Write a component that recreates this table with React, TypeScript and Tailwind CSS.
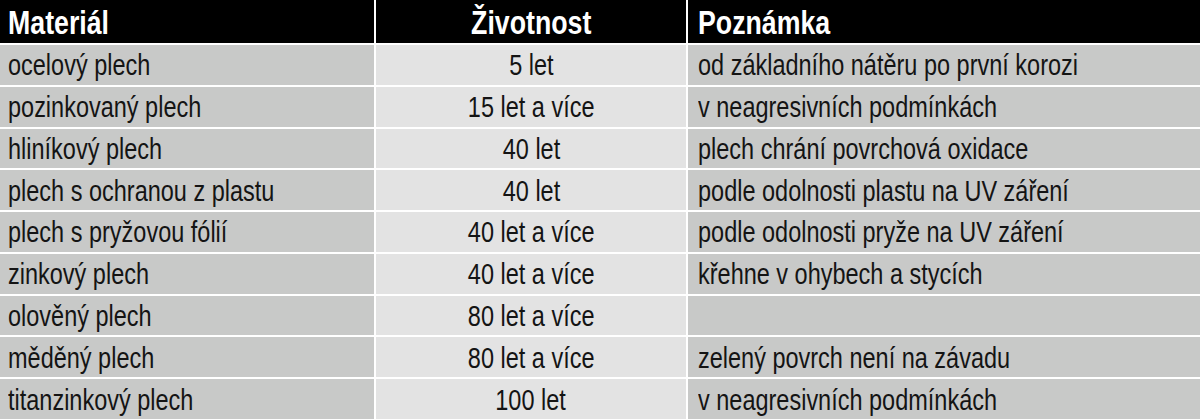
import React from "react";

interface Row {
  material: string;
  life: string;
  note: string;
}

const rows: Row[] = [
  { material: "ocelový plech", life: "5 let", note: "od základního nátěru po první korozi" },
  { material: "pozinkovaný plech", life: "15 let a více", note: "v neagresivních podmínkách" },
  { material: "hliníkový plech", life: "40 let", note: "plech chrání povrchová oxidace" },
  { material: "plech s ochranou z plastu", life: "40 let", note: "podle odolnosti plastu na UV záření" },
  { material: "plech s pryžovou fólií", life: "40 let a více", note: "podle odolnosti pryže na UV záření" },
  { material: "zinkový plech", life: "40 let a více", note: "křehne v ohybech a stycích" },
  { material: "olověný plech", life: "80 let a více", note: "" },
  { material: "měděný plech", life: "80 let a více", note: "zelený povrch není na závadu" },
  { material: "titanzinkový plech", life: "100 let", note: "v neagresivních podmínkách" },
];

// condensed look: no narrow face installed, so squeeze Liberation Sans
const head = "flex items-center bg-black pt-[2px] text-[33px] font-bold leading-none text-white";
const cell = "flex min-h-0 items-center pt-[2px] text-[29px] leading-none text-[#141414]";

export default function App() {
  return (
    <div className="grid h-[419px] w-[1200px] grid-cols-[374px_310px_1fr] grid-rows-[43px_repeat(9,minmax(0,1fr))] gap-[2px] overflow-hidden bg-white font-['Liberation_Sans',Arial,sans-serif]">
      <div className={`${head} pl-2`}>
        <span className="origin-left scale-x-[0.81] whitespace-nowrap">Materiál</span>
      </div>
      <div className={`${head} justify-center`}>
        <span className="origin-center scale-x-[0.81] whitespace-nowrap">Životnost</span>
      </div>
      <div className={`${head} pl-[10px]`}>
        <span className="origin-left scale-x-[0.81] whitespace-nowrap">Poznámka</span>
      </div>

      {rows.map((r) => (
        <React.Fragment key={r.material}>
          <div className={`${cell} bg-[#c8c9c8] pl-2`}>
            <span className="origin-left scale-x-[0.81] whitespace-nowrap">{r.material}</span>
          </div>
          <div className={`${cell} justify-center bg-[#e3e3e3]`}>
            <span className="origin-center scale-x-[0.81] whitespace-nowrap">{r.life}</span>
          </div>
          <div className={`${cell} bg-[#c8c9c8] pl-[10px]`}>
            <span className="origin-left scale-x-[0.81] whitespace-nowrap">{r.note}</span>
          </div>
        </React.Fragment>
      ))}
    </div>
  );
}
